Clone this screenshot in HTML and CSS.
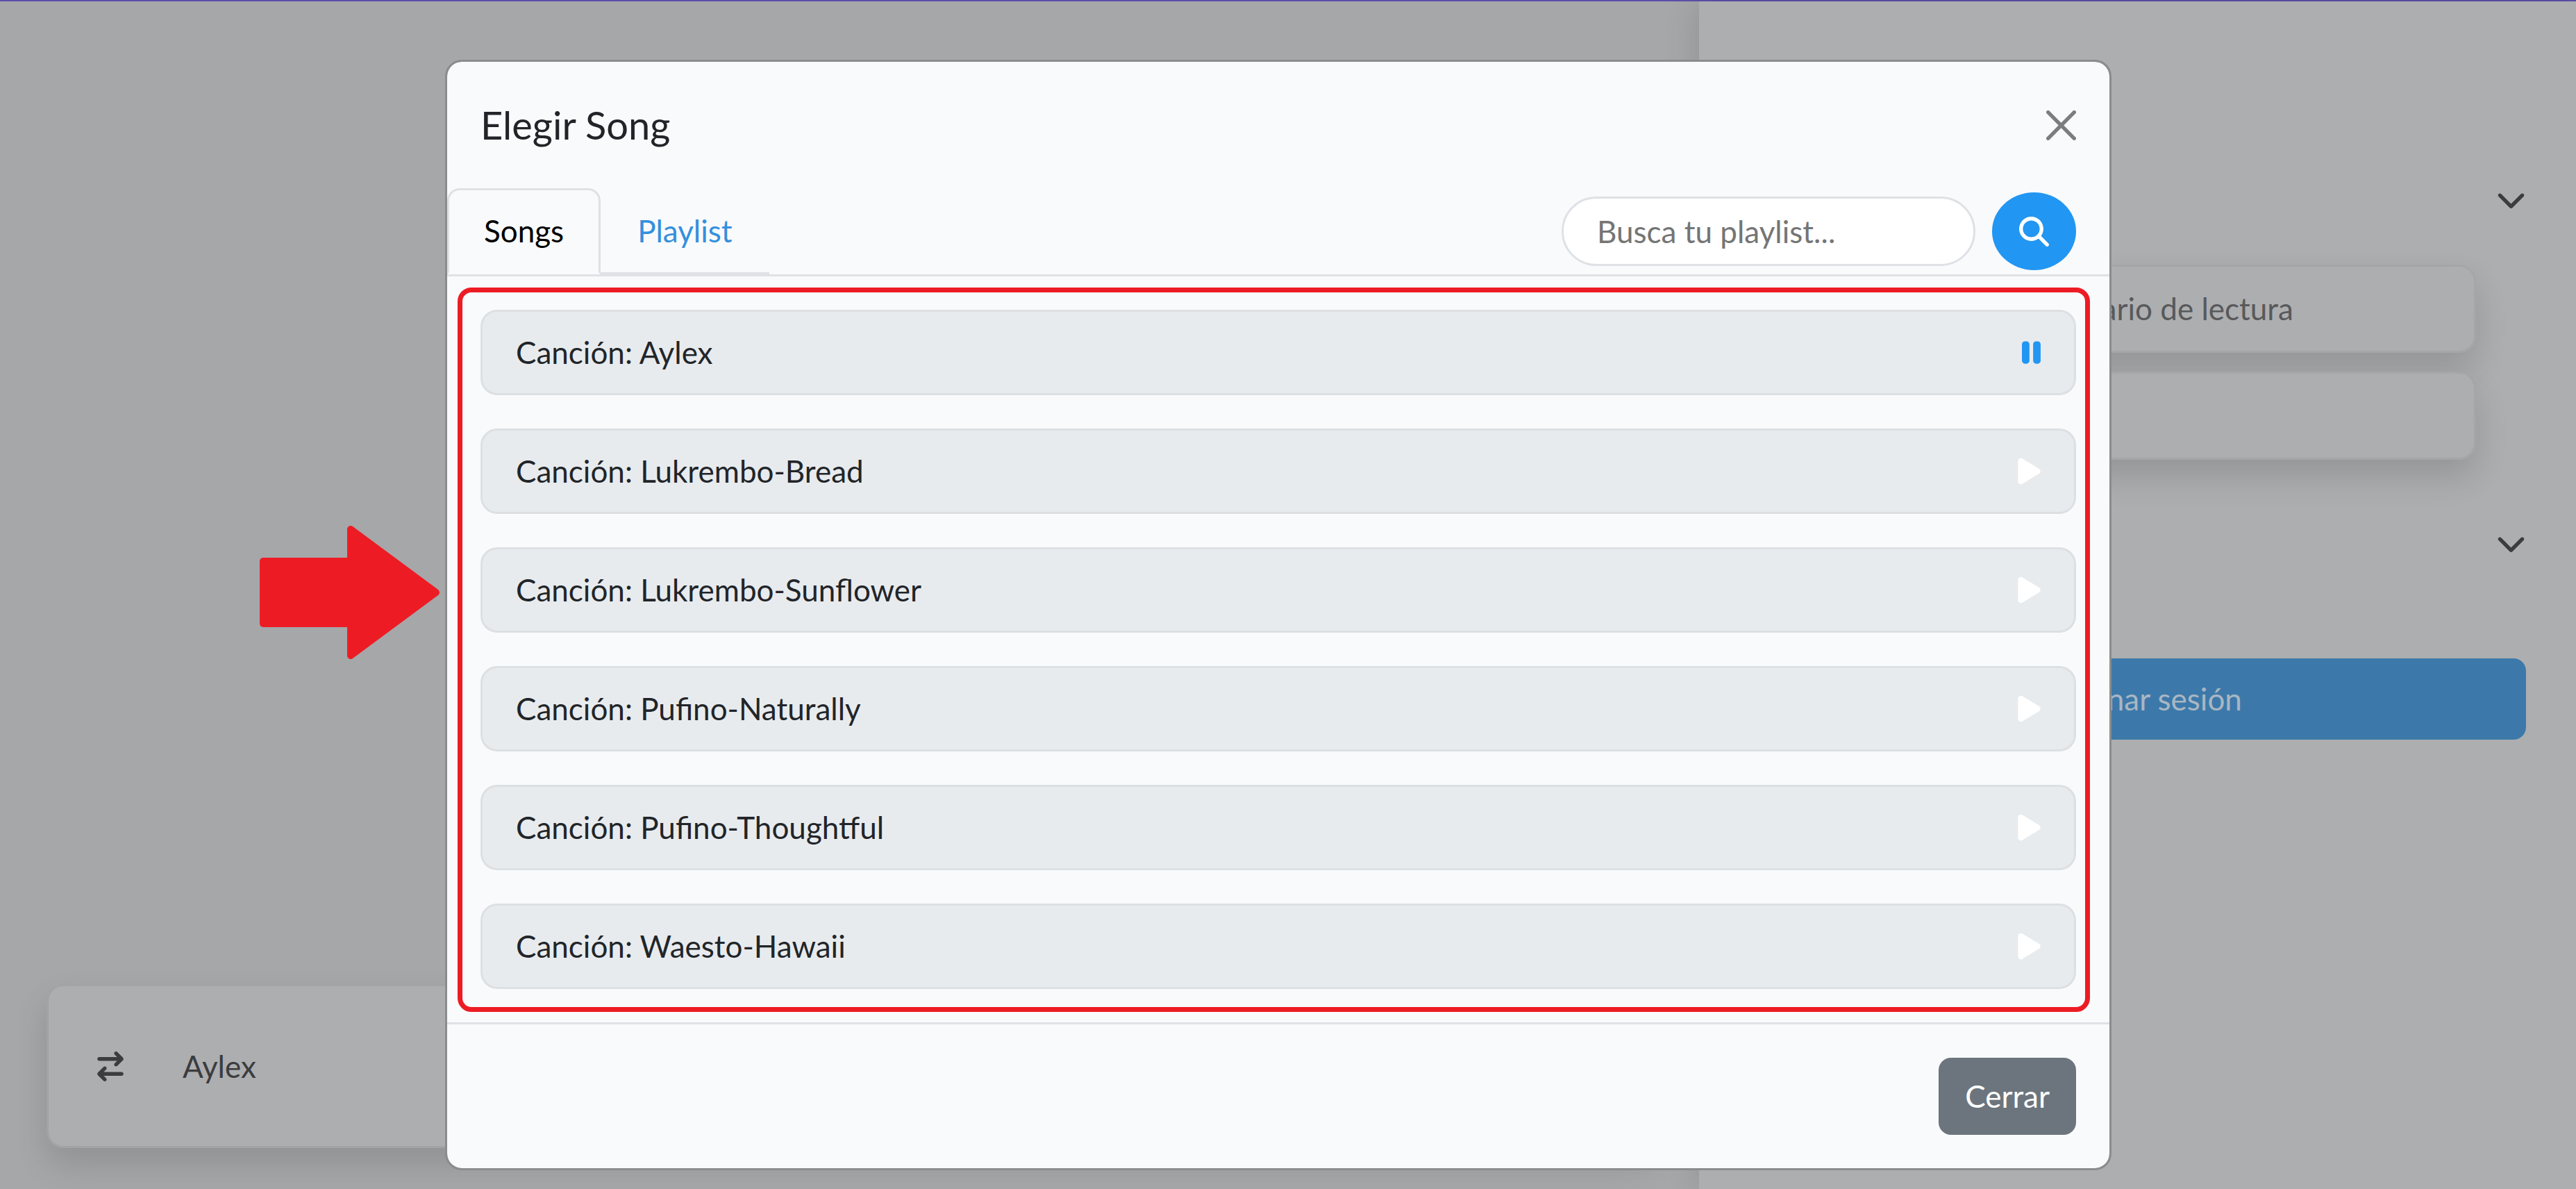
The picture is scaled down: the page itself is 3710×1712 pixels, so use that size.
FILE: index.html
```html
<!DOCTYPE html>
<html lang="es">
<head>
<meta charset="utf-8">
<title>Elegir Song</title>
<link rel="stylesheet" href="styles.css">
</head>
<body>
<svg class="sprite" aria-hidden="true">
  <symbol id="play" viewBox="0 0 384 512"><path d="M73 39c-14.8-9.1-33.4-9.4-48.5-.9S0 62.6 0 80V432c0 17.4 9.4 33.4 24.5 41.9s33.7 8.1 48.5-.9L361 297c14.3-8.7 23-24.2 23-41s-8.7-32.2-23-41L73 39z"/></symbol>
  <symbol id="pause" viewBox="0 0 320 512"><path d="M48 64C21.5 64 0 85.5 0 112V400c0 26.5 21.5 48 48 48H80c26.5 0 48-21.5 48-48V112c0-26.5-21.5-48-48-48H48zm192 0c-26.5 0-48 21.5-48 48V400c0 26.5 21.5 48 48 48h32c26.5 0 48-21.5 48-48V112c0-26.5-21.5-48-48-48H240z"/></symbol>
  <symbol id="search" viewBox="0 0 512 512"><path d="M416 208c0 45.9-14.9 88.3-40 122.7L502.6 457.4c12.5 12.5 12.5 32.8 0 45.3s-32.8 12.5-45.3 0L330.7 376c-34.4 25.2-76.8 40-122.7 40C93.1 416 0 322.9 0 208S93.1 0 208 0S416 93.1 416 208zM208 352a144 144 0 1 0 0-288 144 144 0 1 0 0 288z"/></symbol>
  <symbol id="swap" viewBox="0 0 448 512"><path d="M438.6 150.6c12.5-12.5 12.5-32.8 0-45.3l-96-96c-12.5-12.5-32.8-12.5-45.3 0s-12.5 32.8 0 45.3L338.7 96 32 96C14.3 96 0 110.3 0 128s14.3 32 32 32l306.7 0-41.4 41.4c-12.5 12.5-12.5 32.8 0 45.3s32.8 12.5 45.3 0l96-96zm-333.3 352c12.5 12.5 32.8 12.5 45.3 0s12.5-32.8 0-45.3L109.3 416 416 416c17.7 0 32-14.3 32-32s-14.3-32-32-32l-306.7 0 41.4-41.4c12.5-12.5 12.5-32.8 0-45.3s-32.8-12.5-45.3 0l-96 96c-12.5 12.5-12.5 32.8 0 45.3l96 96z"/></symbol>
  <symbol id="chevron" viewBox="0 0 512 512"><path d="M233.4 406.6c12.5 12.5 32.8 12.5 45.3 0l192-192c12.5-12.5 12.5-32.8 0-45.3s-32.8-12.5-45.3 0L256 338.7 86.6 169.4c-12.5-12.5-32.8-12.5-45.3 0s-12.5 32.8 0 45.3l192 192z"/></symbol>
  <symbol id="close" viewBox="0 0 16 16"><path d="M.293.293a1 1 0 0 1 1.414 0L8 6.586 14.293.293a1 1 0 1 1 1.414 1.414L9.414 8l6.293 6.293a1 1 0 0 1-1.414 1.414L8 9.414l-6.293 6.293a1 1 0 0 1-1.414-1.414L6.586 8 .293 1.707a1 1 0 0 1 0-1.414z"/></symbol>
</svg>

<div class="page">
  <main class="main">
    <section class="player">
      <button class="icon-button" type="button" aria-label="Cambiar"><svg class="icon icon-swap"><use href="#swap"/></svg></button>
      <span>Aylex</span>
    </section>
  </main>
  <aside class="sidebar">
    <button class="icon-button toggle" type="button" aria-label="Desplegar"><svg class="icon"><use href="#chevron"/></svg></button>
    <div class="options">
      <button class="option" type="button">Cuestionario de lectura</button>
      <button class="option" type="button" aria-label="Lectura"></button>
    </div>
    <button class="icon-button toggle" type="button" aria-label="Desplegar"><svg class="icon"><use href="#chevron"/></svg></button>
    <button class="finish" type="button">Terminar sesión</button>
  </aside>
</div>

<div class="overlay">
  <div class="modal" role="dialog" aria-labelledby="modal-title">
    <header class="modal-header">
      <h1 class="modal-title" id="modal-title">Elegir Song</h1>
      <button class="icon-button close" type="button" aria-label="Cerrar ventana"><svg class="icon"><use href="#close"/></svg></button>
    </header>
    <div class="toolbar">
      <nav class="tabs">
        <a class="tab tab-active" href="#songs">Songs</a>
        <a class="tab" href="#playlist">Playlist</a>
      </nav>
      <form class="search">
        <input class="search-input" type="search" placeholder="Busca tu playlist..." aria-label="Busca tu playlist">
        <button class="search-button" type="button" aria-label="Buscar"><svg class="icon"><use href="#search"/></svg></button>
      </form>
    </div>
    <div class="modal-body">
      <ul class="songs" id="songs">
        <li class="song">Canción: Aylex<button class="icon-button pause" type="button" aria-label="Pausar"><svg class="icon icon-pause"><use href="#pause"/></svg></button></li>
        <li class="song">Canción: Lukrembo-Bread<button class="icon-button play" type="button" aria-label="Reproducir"><svg class="icon icon-play"><use href="#play"/></svg></button></li>
        <li class="song">Canción: Lukrembo-Sunflower<button class="icon-button play" type="button" aria-label="Reproducir"><svg class="icon icon-play"><use href="#play"/></svg></button></li>
        <li class="song">Canción: Pufino-Naturally<button class="icon-button play" type="button" aria-label="Reproducir"><svg class="icon icon-play"><use href="#play"/></svg></button></li>
        <li class="song">Canción: Pufino-Thoughtful<button class="icon-button play" type="button" aria-label="Reproducir"><svg class="icon icon-play"><use href="#play"/></svg></button></li>
        <li class="song">Canción: Waesto-Hawaii<button class="icon-button play" type="button" aria-label="Reproducir"><svg class="icon icon-play"><use href="#play"/></svg></button></li>
      </ul>
      <div class="highlight"></div>
      <svg class="pointer" viewBox="0 0 260 192" aria-hidden="true"><path d="M5 51H131V5L254 96 131 187V141H5Z"/></svg>
    </div>
    <footer class="modal-footer">
      <button class="dismiss" type="button">Cerrar</button>
    </footer>
  </div>
</div>
</body>
</html>
```

FILE: styles.css
```css
* {
  box-sizing: border-box;
}

body {
  margin: 0;
  background: #a6a7a9;
  color: #212529;
  font: 44px/69px Lato, "Open Sans", sans-serif;
}

button,
input {
  font: inherit;
}

button {
  cursor: pointer;
}

.sprite {
  display: none;
}

.icon {
  display: block;
  width: 43px;
  height: 43px;
  fill: currentColor;
}

.icon-swap {
  width: 38px;
}

.icon-play {
  width: 33px;
}

.icon-pause {
  width: 27px;
}

.icon-button {
  padding: 0;
  border: 0;
  background: none;
  color: inherit;
}

/* Page behind the dialog */

.page {
  display: flex;
  min-height: 100vh;
  border-top: 2px solid #5c4fab;
  color: #3b3c3e;
}

.main {
  display: flex;
  flex: 1;
  flex-direction: column;
  justify-content: flex-end;
  padding: 0 67px 59px;
}

.player {
  display: flex;
  align-items: center;
  gap: 85px;
  height: 236px;
  padding: 0 70px;
  border: 3px solid #a2a3a5;
  border-radius: 24px;
  background: #adaeb0;
  box-shadow: 0 24px 48px rgba(0, 0, 0, 0.13);
}

.sidebar {
  display: flex;
  flex-direction: column;
  width: 1263px;
  padding: 263px 72px 0;
  background: #adaeb0;
  box-shadow: 0 0 48px rgba(0, 0, 0, 0.14);
}

.toggle {
  align-self: flex-end;
}

.options {
  display: flex;
  flex-direction: column;
  gap: 27px;
  padding: 73px 72px 98px;
}

.option {
  height: 127px;
  border: 3px solid #a5a6a8;
  border-radius: 24px;
  background: #adaeb0;
  box-shadow: 0 24px 48px rgba(0, 0, 0, 0.14);
  color: #58595b;
}

.finish {
  height: 117px;
  margin-top: 145px;
  border: 0;
  border-radius: 18px;
  background: #3c79aa;
  color: #a9b6c2;
}

/* Dialog */

.overlay {
  position: absolute;
  inset: 0;
  display: flex;
  align-items: flex-start;
  justify-content: center;
  padding: 86px 28px 0 0;
}

.modal {
  width: 2400px;
  max-width: 100%;
  border: 3px solid #8b8c8e;
  border-radius: 24px;
  background: #f9fafc;
  background-clip: padding-box;
}

.modal-header {
  display: flex;
  align-items: center;
  justify-content: space-between;
  padding: 48px;
}

.modal-title {
  margin: 0;
  font-size: 56px;
  font-weight: 400;
  line-height: 86px;
}

.close {
  color: #7c7d7e;
}

.toolbar {
  display: flex;
  justify-content: space-between;
  height: 127px;
  padding-right: 48px;
  border-bottom: 3px solid #dee1e5;
}

.tabs {
  display: flex;
  border-bottom: 3px solid #dee1e5;
}

.tab {
  margin-bottom: -3px;
  padding: 24px 50px;
  border: 3px solid transparent;
  border-radius: 18px 18px 0 0;
  color: #3490dc;
  text-decoration: none;
}

.tab-active {
  border-color: #dee1e5 #dee1e5 #f9fafc;
  background: #f9fafc;
  color: #000;
}

.search {
  display: flex;
  align-items: center;
  gap: 24px;
}

.search-input {
  width: 596px;
  height: 100px;
  padding: 0 48px;
  border: 3px solid #dee1e5;
  border-radius: 50px;
  outline: 0;
  background: #fff;
  appearance: none;
}

.search-input::placeholder {
  color: #757575;
  opacity: 1;
}

.search-button {
  display: grid;
  place-items: center;
  width: 121px;
  height: 112px;
  padding: 0;
  border: 0;
  border-radius: 50%;
  background: #2196f3;
  color: #fff;
}

.modal-body {
  position: relative;
  padding: 48px;
}

.songs {
  display: flex;
  flex-direction: column;
  gap: 48px;
  margin: 0;
  padding: 0;
  list-style: none;
}

.song {
  display: flex;
  align-items: center;
  justify-content: space-between;
  padding: 24px 48px;
  border: 3px solid #dde0e3;
  border-radius: 24px;
  background: #e8ebee;
}

.play {
  color: #fff;
}

.pause {
  color: #2196f3;
}

.highlight {
  position: absolute;
  inset: 16px 28px 15px 15px;
  border: 7px solid #ed1c24;
  border-radius: 20px;
  pointer-events: none;
}

.pointer {
  position: absolute;
  top: 359px;
  left: -270px;
  width: 260px;
  height: 192px;
  fill: #ed1c24;
  stroke: #ed1c24;
  stroke-width: 10px;
  stroke-linejoin: round;
}

.modal-footer {
  display: flex;
  justify-content: flex-end;
  padding: 48px;
  border-top: 3px solid #dee1e5;
}

.dismiss {
  padding: 21px 38px;
  border: 0;
  border-radius: 18px;
  background: #6c757d;
  color: #fff;
}
```
